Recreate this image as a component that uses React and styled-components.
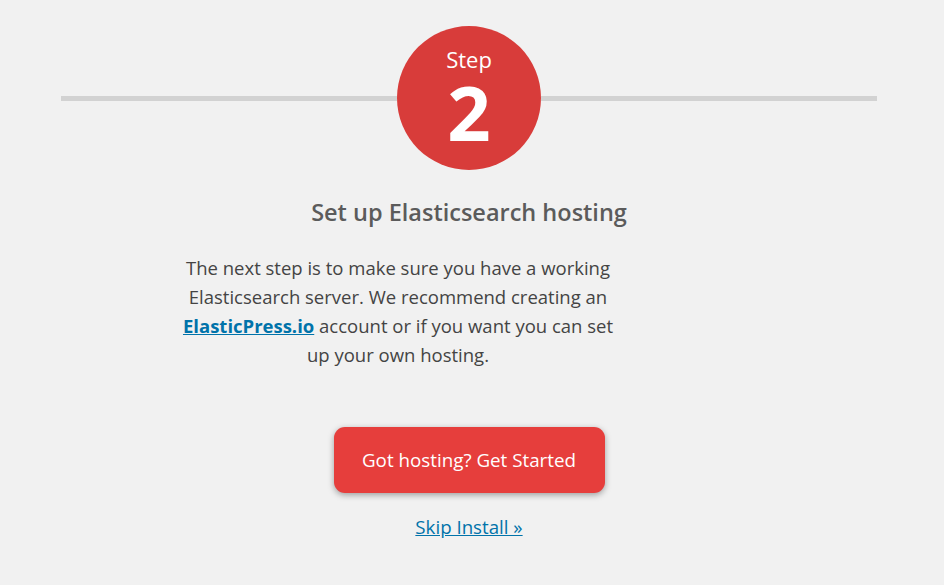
import React from "react";
import styled, { createGlobalStyle } from "styled-components";

const Global = createGlobalStyle`
  html, body { margin: 0; padding: 0; background: #f1f1f1; }
  body { font-family: "Open Sans", "Noto Sans", sans-serif; -webkit-font-smoothing: antialiased; }
`;

const Page = styled.div`
  width: 944px;
  height: 585px;
  box-sizing: border-box;
  padding: 26px 67px 0 61px;
  background: #f1f1f1;
`;

const StepRow = styled.div`
  display: flex;
  align-items: center;
`;

const Rule = styled.div`
  flex: 1;
  height: 5px;
  background: #d2d2d2;
`;

const Circle = styled.div`
  width: 144px;
  height: 144px;
  border-radius: 50%;
  background: #d83c3a;
  color: #fff;
  display: flex;
  flex-direction: column;
  align-items: center;
  box-sizing: border-box;
  padding-top: 18px;
`;

const StepLabel = styled.div`
  font-size: 22px;
  line-height: 30px;
`;

const StepNumber = styled.div`
  font-size: 76px;
  font-weight: 700;
  line-height: 76px;
`;

const Heading = styled.h2`
  margin: 27px 0 0;
  text-align: center;
  font-size: 23.5px;
  font-weight: 600;
  color: #5b5b5b;
  line-height: 30px;
`;

const Body = styled.p`
  margin: 26px 0 0 117px;
  width: 440px;
  text-align: center;
  font-size: 18.5px;
  line-height: 29px;
  color: #444;
`;

const InlineLink = styled.a`
  color: #0073aa;
  font-weight: 700;
  text-decoration: underline;
`;

const Actions = styled.div`
  display: flex;
  flex-direction: column;
  align-items: center;
  margin-top: 58px;
`;

const Primary = styled.button`
  width: 271px;
  height: 66px;
  border: none;
  border-radius: 11px;
  background: #e63e3c;
  color: #fff;
  font-family: inherit;
  font-size: 18.8px;
  box-shadow: 0 2px 6px rgba(0, 0, 0, 0.35);
  cursor: pointer;
`;

const Skip = styled.a`
  margin-top: 21px;
  font-size: 18.7px;
  line-height: 26px;
  color: #0073aa;
  text-decoration: underline;
`;

export default function App() {
  return (
    <>
      <Global />
      <Page>
        <StepRow>
          <Rule />
          <Circle>
            <StepLabel>Step</StepLabel>
            <StepNumber>2</StepNumber>
          </Circle>
          <Rule />
        </StepRow>
        <Heading>Set up Elasticsearch hosting</Heading>
        <Body>
          The next step is to make sure you have a working<br />
          Elasticsearch server. We recommend creating an<br />
          <InlineLink href="#">ElasticPress.io</InlineLink> account or if you want you can set<br />
          up your own hosting.
        </Body>
        <Actions>
          <Primary>Got hosting? Get Started</Primary>
          <Skip href="#">Skip Install »</Skip>
        </Actions>
      </Page>
    </>
  );
}
